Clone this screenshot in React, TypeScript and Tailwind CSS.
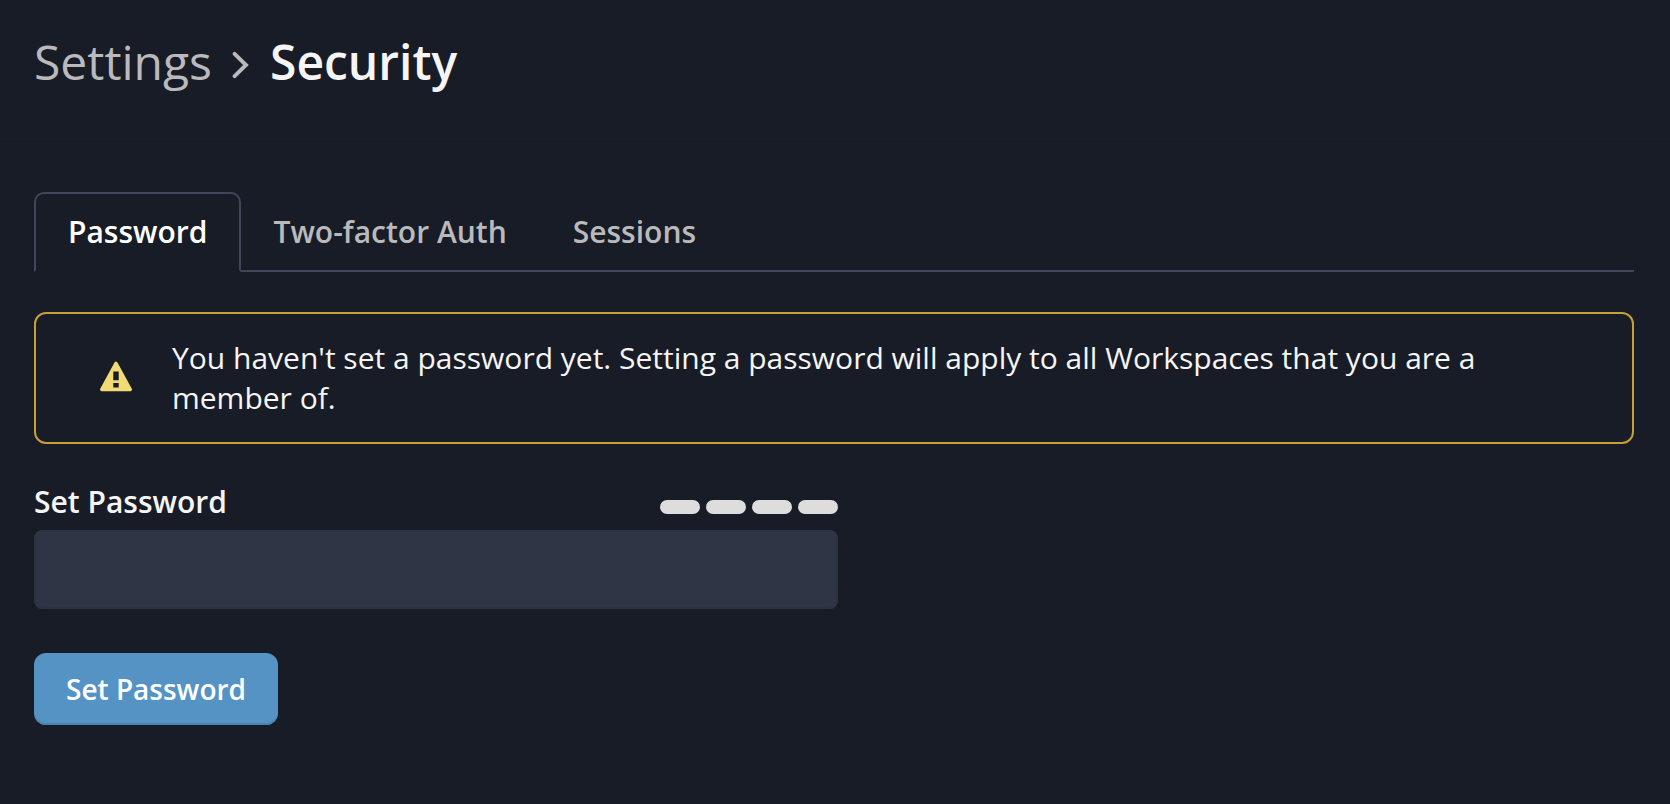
const tabs = ['Password', 'Two-factor Auth', 'Sessions'];
const strengthSteps = [1, 2, 3, 4];

export default function App() {
  return (
    <div className="min-h-screen bg-[#181c26] font-['Open_Sans',sans-serif] text-[#f5f5f5]">
      <header className="border-b border-[#161a23] pt-[26px] pr-[36px] pb-[43px] pl-[34px]">
        <nav aria-label="Breadcrumb" className="flex items-center text-[48px] leading-[72px]">
          <a href="#settings" className="text-[#bababd]">Settings</a>
          <svg viewBox="0 0 18 28" className="mx-[20px] mt-[6px] h-[28px] w-[18px]" fill="none" stroke="#bababd" strokeWidth="3.9" strokeLinecap="round" aria-hidden="true">
            <path d="M2.6 2.8L14 14L2.6 25.2" />
          </svg>
          <h1 className="font-semibold">Security</h1>
        </nav>
      </header>
      <main className="pt-[50px] pr-[36px] pb-10 pl-[34px]">
        <div role="tablist" className="flex h-[80px] text-[30px] font-semibold leading-[40px]">
          {tabs.map((tab, i) => (
            <button
              key={tab}
              role="tab"
              type="button"
              aria-selected={i === 0}
              className={
                i === 0
                  ? 'rounded-t-[10px] border-2 border-[#41475a] border-b-transparent px-8 text-white'
                  : 'border-y-2 border-t-transparent border-b-[#41475a] pr-[34px] pl-8 text-[#bababd]'
              }
            >
              {tab}
            </button>
          ))}
          <div className="grow border-b-2 border-[#41475a]" />
        </div>
        <div role="alert" className="mt-[40px] flex items-center gap-[40px] rounded-[12px] border-2 border-[#c4a037] py-[24px] pr-[80px] pl-[64px] text-[30px] leading-[40px]">
          <svg viewBox="0 0 32 34" className="h-[34px] w-[32px] shrink-0" aria-hidden="true">
            <path d="M16 2.4L30.3 28.5H1.7z" fill="#f2da75" stroke="#f2da75" strokeLinejoin="round" strokeWidth="3.4" />
            <path d="M13.3 10.4h5.4v8.8h-5.4zM13.3 22h5.4v4.4h-5.4z" fill="#181c26" />
          </svg>
          <p>You haven't set a password yet. Setting a password will apply to all Workspaces that you are a member of.</p>
        </div>
        <form className="mt-[38px] w-full max-w-[804px]">
          <div className="flex items-end justify-between">
            <label htmlFor="password" className="text-[30px] font-semibold leading-[40px]">Set Password</label>
            <div className="mb-2 flex gap-[6px]" aria-hidden="true">
              {strengthSteps.map((step) => (
                <span key={step} className="h-[14px] w-[40px] rounded-full bg-[#dddddd]" />
              ))}
            </div>
          </div>
          <input id="password" type="password" className="mt-2 block h-[79px] w-full rounded-[8px] border-2 border-[#2d3242] bg-[#303545] px-6" />
          <button type="button" className="mt-[44px] h-[72px] rounded-[12px] bg-[#5593c5] px-[32px] text-[28px] font-semibold text-white shadow-[inset_0_-2px_0_#4a82b0]">Set Password</button>
        </form>
      </main>
    </div>
  );
}
